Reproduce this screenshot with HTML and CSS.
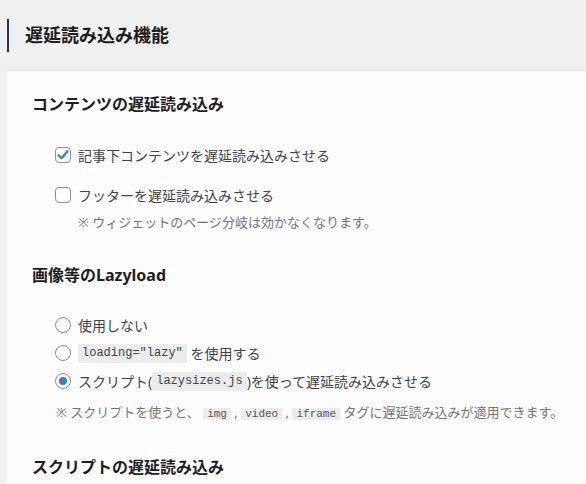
FILE: index.html
```html
<!DOCTYPE html>
<html lang="ja">
<head>
<meta charset="utf-8">
<link rel="stylesheet" href="styles.css">
</head>
<body>
<div class="page">
  <h2 class="page-title">遅延読み込み機能</h2>
  <div class="panel">
    <h3 class="sec-title">コンテンツの遅延読み込み</h3>
    <div class="field first">
      <label class="opt"><span class="box checked"><svg viewBox="0 0 16 16" width="16" height="16"><path d="M3.6 8.2 L6.6 11.2 L12.4 4.2" fill="none" stroke="#3582c4" stroke-width="2.2" stroke-linecap="round" stroke-linejoin="round"/></svg></span>記事下コンテンツを遅延読み込みさせる</label>
    </div>
    <div class="field second">
      <label class="opt"><span class="box"></span>フッターを遅延読み込みさせる</label>
      <p class="note indent">※ ウィジェットのページ分岐は効かなくなります。</p>
    </div>

    <h3 class="sec-title sec2">画像等のLazyload</h3>
    <div class="radios">
      <label class="opt"><span class="radio"></span>使用しない</label>
      <label class="opt"><span class="radio"></span><code class="code">loading="lazy"</code>&nbsp;を使用する</label>
      <label class="opt"><span class="radio on"></span>スクリプト(<code class="code">lazysizes.js</code>)を使って遅延読み込みさせる</label>
    </div>
    <p class="note note2">※ スクリプトを使うと、 <code class="code sm">img</code> , <code class="code sm">video</code> , <code class="code sm">iframe</code> タグに遅延読み込みが適用できます。</p>

    <h3 class="sec-title sec3">スクリプトの遅延読み込み</h3>
  </div>
</div>
</body>
</html>
```

FILE: styles.css
```css
html, body {
  margin: 0;
  padding: 0;
  background: #f0f0f0;
}
body {
  font-family: "Noto Sans", "Noto Sans CJK JP", sans-serif;
  color: #3c434a;
  overflow: hidden;
}
.page {
  padding: 19px 0 0 7px;
}
.page-title {
  margin: 0;
  height: 33px;
  line-height: 33px;
  border-left: 2px solid #1d3b4f;
  padding-left: 16px;
  font-size: 18px;
  font-weight: 700;
  color: #1e1e1e;
}
.panel {
  margin-top: 18px;
  background: #fdfdfd;
  border-top: 1px solid #e6e6e6;
  padding: 21px 0 6px 25px;
}
.sec-title {
  margin: 0;
  font-size: 16px;
  line-height: 24px;
  font-weight: 700;
  color: #1e1e1e;
}
.field.first {
  margin-top: 27px;
  padding-left: 23px;
}
.field.second {
  margin-top: 16px;
  padding-left: 23px;
}
.opt {
  display: flex;
  align-items: center;
  height: 24px;
  font-size: 14px;
  color: #3c434a;
}
.box, .radio {
  flex: none;
  box-sizing: border-box;
  width: 16px;
  height: 16px;
  border: 1px solid #8c8f94;
  background: #fff;
  margin-right: 7px;
  display: inline-flex;
  align-items: center;
  justify-content: center;
}
.box {
  border-radius: 4px;
}
.box svg {
  display: block;
  margin: -1px;
}
.radio {
  border-radius: 50%;
}
.radio.on::after {
  content: "";
  width: 8px;
  height: 8px;
  border-radius: 50%;
  background: #3582c4;
}
.note {
  margin: 0;
  font-size: 13px;
  line-height: 20px;
  color: #757575;
}
.note.indent {
  margin-top: 5px;
  padding-left: 23px;
}
.sec2 {
  margin-top: 31px;
}
.radios {
  margin-top: 26px;
  padding-left: 23px;
  display: flex;
  flex-direction: column;
  gap: 4px;
}
.code {
  font-family: "Liberation Mono", "DejaVu Sans Mono", monospace;
  font-size: 12px;
  line-height: 19px;
  background: #ececec;
  color: #3c434a;
  padding: 0 4px;
  border-radius: 1px;
}
.code.sm {
  font-size: 11px;
  color: #50575e;
}
.note2 {
  margin-top: 9px;
  padding-left: 24px;
}
.sec3 {
  margin-top: 31px;
}
```
